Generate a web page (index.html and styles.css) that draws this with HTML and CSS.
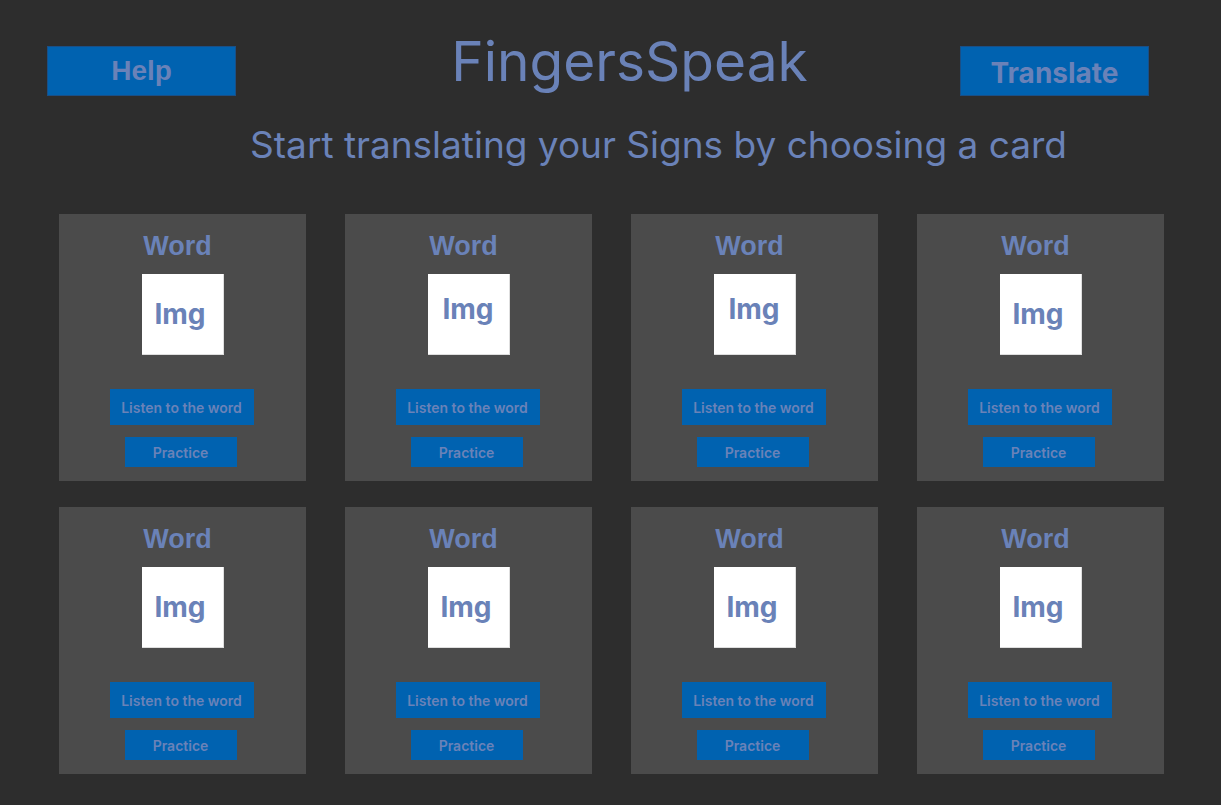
FILE: index.html
```html
<!DOCTYPE html>
<html lang="en">
<head>
<meta charset="utf-8">
<title>FingersSpeak</title>
<link rel="stylesheet" href="styles.css">
</head>
<body>
<header class="header">
  <button class="top-btn top-btn--help">Help</button>
  <h1 class="title">FingersSpeak</h1>
  <button class="top-btn top-btn--translate">Translate</button>
</header>
<p class="subtitle">Start translating your Signs by choosing a card</p>
<main class="cards">
  <section class="card">
    <h2 class="card-word">Word</h2>
    <div class="img-box"><span>Img</span></div>
    <button class="card-btn card-btn--listen">Listen to the word</button>
    <button class="card-btn card-btn--practice">Practice</button>
  </section>
  <section class="card">
    <h2 class="card-word">Word</h2>
    <div class="img-box img-box--raised"><span>Img</span></div>
    <button class="card-btn card-btn--listen">Listen to the word</button>
    <button class="card-btn card-btn--practice">Practice</button>
  </section>
  <section class="card">
    <h2 class="card-word">Word</h2>
    <div class="img-box img-box--raised"><span>Img</span></div>
    <button class="card-btn card-btn--listen">Listen to the word</button>
    <button class="card-btn card-btn--practice">Practice</button>
  </section>
  <section class="card">
    <h2 class="card-word">Word</h2>
    <div class="img-box"><span>Img</span></div>
    <button class="card-btn card-btn--listen">Listen to the word</button>
    <button class="card-btn card-btn--practice">Practice</button>
  </section>
  <section class="card">
    <h2 class="card-word">Word</h2>
    <div class="img-box"><span>Img</span></div>
    <button class="card-btn card-btn--listen">Listen to the word</button>
    <button class="card-btn card-btn--practice">Practice</button>
  </section>
  <section class="card">
    <h2 class="card-word">Word</h2>
    <div class="img-box"><span>Img</span></div>
    <button class="card-btn card-btn--listen">Listen to the word</button>
    <button class="card-btn card-btn--practice">Practice</button>
  </section>
  <section class="card">
    <h2 class="card-word">Word</h2>
    <div class="img-box"><span>Img</span></div>
    <button class="card-btn card-btn--listen">Listen to the word</button>
    <button class="card-btn card-btn--practice">Practice</button>
  </section>
  <section class="card">
    <h2 class="card-word">Word</h2>
    <div class="img-box"><span>Img</span></div>
    <button class="card-btn card-btn--listen">Listen to the word</button>
    <button class="card-btn card-btn--practice">Practice</button>
  </section>
</main>
</body>
</html>
```

FILE: styles.css
```css
* {
  box-sizing: border-box;
}

html, body {
  margin: 0;
  padding: 0;
}

body {
  background: #2d2d2d;
  color: #6a82b8;
  font-family: Inter, "Noto Sans", sans-serif;
  width: 1221px;
  height: 805px;
  overflow: hidden;
}

button {
  font: inherit;
  color: inherit;
  cursor: pointer;
}

/* Header */
.header {
  display: flex;
  align-items: flex-start;
  padding: 27px 72px 0 47px;
}

.top-btn {
  width: 189px;
  height: 50px;
  margin-top: 19px;
  background: #0062b0;
  border: 1px solid #1a4f86;
  padding: 0;
  font-weight: 700;
  font-size: 28px;
  color: #6a82b8;
}

.top-btn--help {
  font-family: "Liberation Sans", Arial, sans-serif;
  line-height: 44px;
}

.top-btn--translate {
  font-family: Inter, sans-serif;
  padding-top: 4px;
}

.title {
  flex: 1;
  margin: 0;
  padding-left: 63px;
  text-align: center;
  font-family: Inter, sans-serif;
  font-weight: 400;
  font-size: 55px;
  line-height: 68px;
}

.subtitle {
  margin: 27px 0 0;
  padding-left: 96px;
  text-align: center;
  font-family: Inter, sans-serif;
  font-size: 37px;
  line-height: 44px;
}

/* Cards */
.cards {
  display: grid;
  grid-template-columns: repeat(4, 247px);
  column-gap: 39px;
  row-gap: 26px;
  padding-left: 59px;
  margin-top: 47px;
}

.card {
  background: #4b4b4b;
  height: 267px;
  display: flex;
  flex-direction: column;
  align-items: center;
  padding: 16px 0 0;
}

.card-word {
  margin: 0 0 0 -10px;
  font-family: "Liberation Sans", Arial, sans-serif;
  font-weight: 700;
  font-size: 27px;
  line-height: 32px;
}

.img-box {
  width: 82px;
  height: 81px;
  margin-top: 12px;
  background: #ffffff;
  border-right: 1px solid #dedede;
  border-bottom: 1px solid #dedede;
  display: flex;
  align-items: center;
  justify-content: center;
  font-family: Inter, sans-serif;
  font-weight: 700;
  font-size: 28px;
  padding-right: 4px;
}

.img-box--raised {
  padding-bottom: 10px;
  padding-right: 0;
}

.card-btn {
  background: #0062b0;
  border: none;
  padding: 0;
  font-family: Inter, sans-serif;
  font-weight: 600;
  font-size: 14px;
  color: #6a82b8;
}

.card-btn--listen {
  width: 144px;
  height: 36px;
  margin-top: 34px;
  margin-left: -2px;
}

.card-btn--practice {
  width: 112px;
  height: 30px;
  margin-top: 12px;
  margin-left: -4px;
}
```
